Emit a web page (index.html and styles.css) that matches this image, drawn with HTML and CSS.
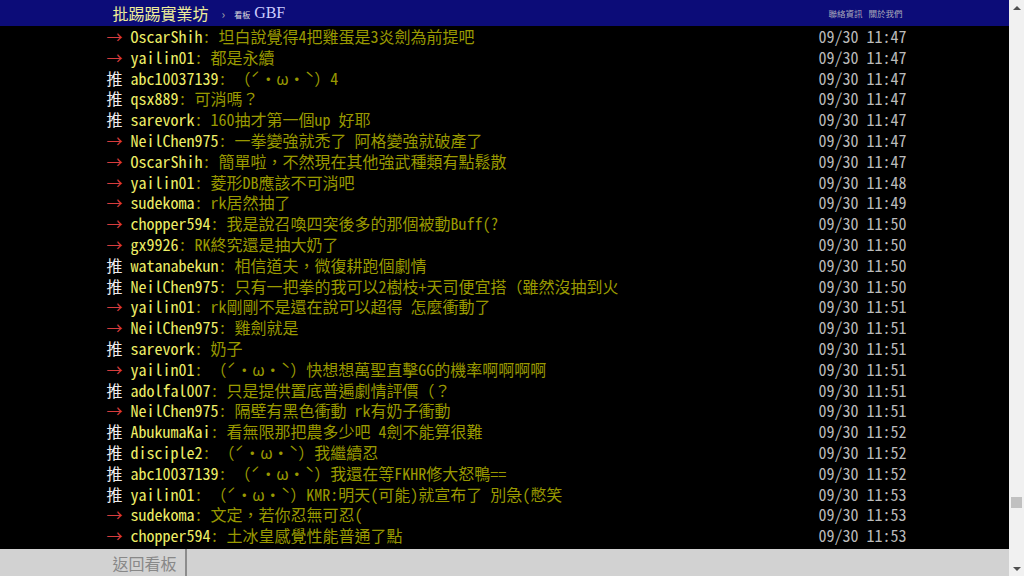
FILE: index.html
```html
<!DOCTYPE html>
<html lang="zh-Hant">
<head>
    <meta charset="utf-8">
    <title>看板 GBF 文章閱讀 - 批踢踢實業坊</title>
    <link rel="stylesheet" href="styles.css">
</head>
<body>
    <div class="page">
        <div class="topbar">
            <div class="topbar-inner">
                <a class="logo">批踢踢實業坊</a>
                <span class="sep">›</span>
                <a class="board"><span class="board-label">看板</span> GBF</a>
                <div class="links">
                    <a>聯絡資訊</a>
                    <a>關於我們</a>
                </div>
            </div>
        </div>

        <div class="main">
            <div class="bbs-screen">
                <div class="push"><span class="push-tag arrow">→ </span><span class="push-userid">OscarShih</span><span class="push-content">: 坦白說覺得4把雞蛋是3炎劍為前提吧</span><span class="push-time">09/30 11:47</span></div>
                <div class="push"><span class="push-tag arrow">→ </span><span class="push-userid">yailin01</span><span class="push-content">: 都是永續</span><span class="push-time">09/30 11:47</span></div>
                <div class="push"><span class="push-tag good">推 </span><span class="push-userid">abc10037139</span><span class="push-content">: （ˊ・ω・ˋ）4</span><span class="push-time">09/30 11:47</span></div>
                <div class="push"><span class="push-tag good">推 </span><span class="push-userid">qsx889</span><span class="push-content">: 可消嗎？</span><span class="push-time">09/30 11:47</span></div>
                <div class="push"><span class="push-tag good">推 </span><span class="push-userid">sarevork</span><span class="push-content">: 160抽才第一個up 好耶</span><span class="push-time">09/30 11:47</span></div>
                <div class="push"><span class="push-tag arrow">→ </span><span class="push-userid">NeilChen975</span><span class="push-content">: 一拳變強就禿了 阿格變強就破產了</span><span class="push-time">09/30 11:47</span></div>
                <div class="push"><span class="push-tag arrow">→ </span><span class="push-userid">OscarShih</span><span class="push-content">: 簡單啦，不然現在其他強武種類有點鬆散</span><span class="push-time">09/30 11:47</span></div>
                <div class="push"><span class="push-tag arrow">→ </span><span class="push-userid">yailin01</span><span class="push-content">: 菱形DB應該不可消吧</span><span class="push-time">09/30 11:48</span></div>
                <div class="push"><span class="push-tag arrow">→ </span><span class="push-userid">sudekoma</span><span class="push-content">: rk居然抽了</span><span class="push-time">09/30 11:49</span></div>
                <div class="push"><span class="push-tag arrow">→ </span><span class="push-userid">chopper594</span><span class="push-content">: 我是說召喚四突後多的那個被動Buff(?</span><span class="push-time">09/30 11:50</span></div>
                <div class="push"><span class="push-tag arrow">→ </span><span class="push-userid">gx9926</span><span class="push-content">: RK終究還是抽大奶了</span><span class="push-time">09/30 11:50</span></div>
                <div class="push"><span class="push-tag good">推 </span><span class="push-userid">watanabekun</span><span class="push-content">: 相信道夫，微復耕跑個劇情</span><span class="push-time">09/30 11:50</span></div>
                <div class="push"><span class="push-tag good">推 </span><span class="push-userid">NeilChen975</span><span class="push-content">: 只有一把拳的我可以2樹枝+天司便宜搭（雖然沒抽到火</span><span class="push-time">09/30 11:50</span></div>
                <div class="push"><span class="push-tag arrow">→ </span><span class="push-userid">yailin01</span><span class="push-content">: rk剛剛不是還在說可以超得 怎麼衝動了</span><span class="push-time">09/30 11:51</span></div>
                <div class="push"><span class="push-tag arrow">→ </span><span class="push-userid">NeilChen975</span><span class="push-content">: 雞劍就是</span><span class="push-time">09/30 11:51</span></div>
                <div class="push"><span class="push-tag good">推 </span><span class="push-userid">sarevork</span><span class="push-content">: 奶子</span><span class="push-time">09/30 11:51</span></div>
                <div class="push"><span class="push-tag arrow">→ </span><span class="push-userid">yailin01</span><span class="push-content">: （ˊ・ω・ˋ）快想想萬聖直擊GG的機率啊啊啊啊</span><span class="push-time">09/30 11:51</span></div>
                <div class="push"><span class="push-tag good">推 </span><span class="push-userid">adolfal007</span><span class="push-content">: 只是提供置底普遍劇情評價（？</span><span class="push-time">09/30 11:51</span></div>
                <div class="push"><span class="push-tag arrow">→ </span><span class="push-userid">NeilChen975</span><span class="push-content">: 隔壁有黑色衝動 rk有奶子衝動</span><span class="push-time">09/30 11:51</span></div>
                <div class="push"><span class="push-tag good">推 </span><span class="push-userid">AbukumaKai</span><span class="push-content">: 看無限那把農多少吧 4劍不能算很難</span><span class="push-time">09/30 11:52</span></div>
                <div class="push"><span class="push-tag good">推 </span><span class="push-userid">disciple2</span><span class="push-content">: （ˊ・ω・ˋ）我繼續忍</span><span class="push-time">09/30 11:52</span></div>
                <div class="push"><span class="push-tag good">推 </span><span class="push-userid">abc10037139</span><span class="push-content">: （ˊ・ω・ˋ）我還在等FKHR修大怒鴨==</span><span class="push-time">09/30 11:52</span></div>
                <div class="push"><span class="push-tag good">推 </span><span class="push-userid">yailin01</span><span class="push-content">: （ˊ・ω・ˋ）KMR:明天(可能)就宣布了 別急(憋笑</span><span class="push-time">09/30 11:53</span></div>
                <div class="push"><span class="push-tag arrow">→ </span><span class="push-userid">sudekoma</span><span class="push-content">: 文定，若你忍無可忍(</span><span class="push-time">09/30 11:53</span></div>
                <div class="push"><span class="push-tag arrow">→ </span><span class="push-userid">chopper594</span><span class="push-content">: 土冰皇感覺性能普通了點</span><span class="push-time">09/30 11:53</span></div>
            </div>
        </div>

        <div class="navigation">
            <div class="navigation-inner">
                <a class="btn">返回看板</a>
            </div>
        </div>
    </div>

    <div class="scrollbar">
        <div class="scroll-up"></div>
        <div class="scroll-track"><div class="scroll-thumb"></div></div>
        <div class="scroll-down"></div>
    </div>
</body>
</html>
```
FILE: styles.css
```css
html, body {
    margin: 0;
    padding: 0;
}
body {
    height: 576px;
    overflow: hidden;
    display: flex;
    background: #000;
    font-family: "Noto Sans Mono CJK TC", "Noto Sans CJK TC", monospace;
}
a {
    text-decoration: none;
}
.page {
    flex: 1;
    display: flex;
    flex-direction: column;
    min-width: 0;
}

/* top bar */
.topbar {
    height: 26px;
    background: #0c0c78;
    flex-shrink: 0;
}
.topbar-inner {
    width: 800px;
    margin: 0 auto;
    height: 100%;
    display: flex;
    align-items: center;
}
.logo {
    margin-left: 8px;
    font-family: "Noto Sans CJK TC", sans-serif;
    font-size: 16px;
    color: #eeee99;
}
.sep {
    margin: 0 9px 0 13px;
    font-size: 12px;
    color: #aaa;
}
.board {
    font-family: "Liberation Serif", serif;
    font-size: 16px;
    color: #ccccff;
}
.board-label {
    font-family: "Noto Sans CJK TC", sans-serif;
    font-size: 8px;
    color: #ddd;
}
.links {
    margin-left: auto;
    margin-right: 2px;
    display: flex;
    gap: 6px;
    font-family: "Noto Sans CJK TC", sans-serif;
    font-size: 8.5px;
}
.links a {
    color: #aab;
}

/* push lines */
.main {
    flex: 1;
    overflow: hidden;
}
.bbs-screen {
    width: 800px;
    margin: 0 auto;
    padding-left: 4px;
    font-size: 16px;
    line-height: 20.8px;
}
.push {
    height: 20.8px;
    white-space: pre;
}
.push-tag.arrow { color: #d83c3c; }
.push-tag.good { color: #eee; }
.push-userid { color: #ee6; }
.push-content { color: #990; }
.push-time {
    float: right;
    color: #bbb;
}

/* bottom navigation */
.navigation {
    height: 27px;
    flex-shrink: 0;
    background: #d2d2d2;
}
.navigation-inner {
    width: 800px;
    margin: 0 auto;
    height: 100%;
    display: flex;
}
.btn {
    display: flex;
    align-items: center;
    padding: 0 8px;
    width: 64px;
    border-right: 2px solid #8c8c8c;
    font-family: "Noto Sans CJK TC", sans-serif;
    font-size: 16px;
    color: #888;
}

/* fake scrollbar */
.scrollbar {
    width: 15px;
    flex-shrink: 0;
    background: #f1f1f1;
    display: flex;
    flex-direction: column;
}
.scroll-up, .scroll-down {
    height: 15px;
    display: flex;
    align-items: center;
    justify-content: center;
}
.scroll-up::before {
    content: "";
    border-left: 4px solid transparent;
    border-right: 4px solid transparent;
    border-bottom: 4px solid #505050;
}
.scroll-down::before {
    content: "";
    border-left: 4px solid transparent;
    border-right: 4px solid transparent;
    border-top: 4px solid #505050;
}
.scroll-track {
    flex: 1;
    padding: 482px 2px 0;
}
.scroll-thumb {
    height: 11px;
    background: #c1c1c1;
}
```
